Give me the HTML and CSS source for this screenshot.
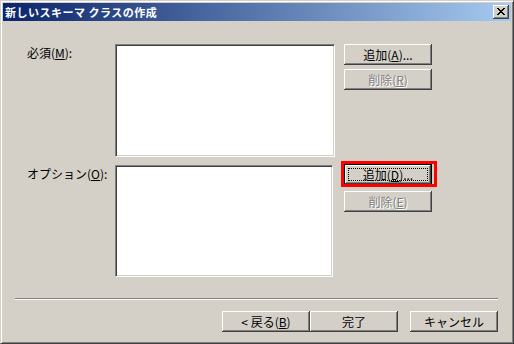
FILE: index.html
```html
<!DOCTYPE html>
<html lang="ja">
<head>
<meta charset="utf-8">
<link rel="stylesheet" href="styles.css">
</head>
<body>
<div class="window">
  <div class="titlebar">
    <span class="title">新しいスキーマ クラスの作成</span>
    <button class="close" aria-label="閉じる">
      <svg width="8" height="7" viewBox="0 0 8 7"><path d="M0 0h2v1h1v1h2V1h1V0h2v1H7v1H6v1H5v1h1v1h1v1h1v1H6V6H5V5H3v1H2v1H0V6h1V5h1V4h1V3H2V2H1V1H0z" fill="#000"/></svg>
    </button>
  </div>
  <div class="content">
    <div class="grid">
      <div class="label">必須(<u>M</u>):</div>
      <div class="listbox lb1"></div>
      <div class="btns">
        <button class="btn">追加(<u>A</u>)...</button>
        <button class="btn disabled">削除(<u>R</u>)</button>
      </div>
      <div class="label">オプション(<u>O</u>):</div>
      <div class="listbox lb2"></div>
      <div class="btns">
        <div class="hl-wrap">
          <button class="btn default"><span class="focus">追加(<u>D</u>)...</span></button>
          <div class="highlight"></div>
        </div>
        <button class="btn disabled">削除(<u>E</u>)</button>
      </div>
    </div>
    <div class="separator"></div>
    <div class="footer">
      <div class="pair">
        <button class="btn">&lt; 戻る(<u>B</u>)</button>
        <button class="btn">完了</button>
      </div>
      <button class="btn">キャンセル</button>
    </div>
  </div>
</div>
</body>
</html>
```
FILE: styles.css
```css
* { box-sizing: border-box; }
html, body { margin: 0; padding: 0; }
body {
  width: 514px;
  height: 344px;
  overflow: hidden;
  background: #d4d0c8;
  font-family: "Noto Sans CJK JP", "DejaVu Sans", sans-serif;
  font-size: 12px;
  color: #000;
}
.window {
  width: 514px;
  height: 344px;
  background: #d4d0c8;
  border-top: 1px solid #d4d0c8;
  border-left: 1px solid #d4d0c8;
  border-right: 1px solid #404040;
  border-bottom: 1px solid #404040;
  box-shadow: inset 1px 1px #fff, inset -1px -1px #808080;
  padding: 2px;
  display: flex;
  flex-direction: column;
}
.titlebar {
  height: 18px;
  background: linear-gradient(to right, #0a246a, #a6caf0);
  display: flex;
  align-items: center;
  justify-content: space-between;
  padding: 0 2px 0 2px;
}
.title {
  color: #fff;
  font-weight: bold;
  font-size: 11px;
  letter-spacing: 0.5px;
  line-height: 18px;
  white-space: nowrap;
}
.close {
  width: 16px;
  height: 14px;
  padding: 0;
  margin: 0;
  border: none;
  background: #d4d0c8;
  box-shadow: inset -1px -1px #404040, inset 1px 1px #fff, inset -2px -2px #808080;
  display: flex;
  align-items: center;
  justify-content: center;
}
.close svg { display: block; margin-top: -1px; }
.content {
  flex: 1;
  display: flex;
  flex-direction: column;
  padding-top: 23px;
}
.grid {
  display: grid;
  grid-template-columns: 79px 220px 88px;
  grid-template-rows: 113px 112px;
  column-gap: 9px;
  row-gap: 8px;
  padding-left: 24px;
}
.label {
  line-height: 14px;
  padding-top: 2px;
  white-space: nowrap;
}
.listbox {
  background: #fff;
  border-top: 1px solid #808080;
  border-left: 1px solid #808080;
  border-right: 1px solid #fff;
  border-bottom: 1px solid #fff;
  box-shadow: inset 1px 1px #404040, inset -1px -1px #d4d0c8;
}
.lb2 { width: 218px; }
.btns {
  display: flex;
  flex-direction: column;
  align-items: flex-start;
}
.lb1 + .btns { gap: 4px; }
.lb2 + .btns { gap: 6px; margin-top: -1px; }
.btn {
  width: 88px;
  height: 21px;
  padding: 0;
  margin: 0;
  border: none;
  background: #d4d0c8;
  font-family: "Noto Sans CJK JP", "DejaVu Sans", sans-serif;
  font-size: 12px;
  line-height: 21px;
  color: #000;
  box-shadow: inset -1px -1px #404040, inset 1px 1px #fff, inset -2px -2px #808080;
  white-space: nowrap;
}
.btn.disabled {
  color: #808080;
  text-shadow: 1px 1px #fff;
}
.btn.default {
  border: 1px solid #000;
  display: flex;
  padding: 3px;
}
.focus {
  flex: 1;
  border: 1px dotted #000;
  line-height: 11px;
  display: flex;
  align-items: center;
  justify-content: center;
}
.hl-wrap {
  position: relative;
  width: 88px;
  height: 21px;
}
.highlight {
  position: absolute;
  left: -3px;
  top: -3px;
  width: 96px;
  height: 26px;
  border: 3px solid #ff0000;
  pointer-events: none;
}
.separator {
  margin: 21px 13px 0 12px;
  height: 2px;
  border-top: 1px solid #808080;
  border-bottom: 1px solid #fff;
}
.footer {
  display: flex;
  justify-content: flex-end;
  gap: 12px;
  padding: 11px 13px 0 0;
}
.pair { display: flex; }
u { text-decoration: underline; text-underline-offset: 1px; }
```
